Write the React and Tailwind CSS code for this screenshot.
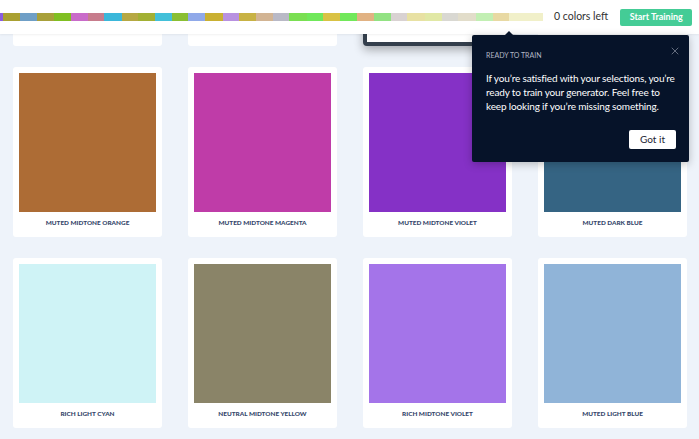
import { X } from 'lucide-react'

const progress = [
  ['#8a5ce0', 3], ['#a9a032', 17], ['#6f9fc6', 17], ['#a8a03a', 17], ['#80bf22', 17],
  ['#c96bc9', 17], ['#c77c8c', 16], ['#3bb7da', 18], ['#b6a843', 16], ['#a2b033', 17],
  ['#43c0d9', 17], ['#8abf33', 16], ['#90a9e9', 17], ['#c9b032', 18], ['#b891e0', 16],
  ['#c8b244', 17], ['#d2b493', 17], ['#b9b9c6', 16], ['#7adf52', 18], ['#70e85a', 16],
  ['#d9c244', 17], ['#72e85a', 17], ['#e1b283', 17], ['#92e283', 17], ['#d9d2d2', 16],
  ['#e8e1a3', 18], ['#e1e8a5', 17], ['#d9d8d2', 16], ['#e2ddca', 18], ['#c2efb3', 17],
  ['#e8d9a3', 16], ['#f1f0c9', 34],
]

const hiddenRow = [
  { name: '', color: '#ffffff' },
  { name: '', color: '#ffffff' },
  { name: '', color: '#ffffff', active: true },
  { name: '', color: '#ffffff' },
]

const swatches = [
  { name: 'Muted Midtone Orange', color: '#ad6c35' },
  { name: 'Muted Midtone Magenta', color: '#bf3ca8' },
  { name: 'Muted Midtone Violet', color: '#8531c6' },
  { name: 'Muted Dark Blue', color: '#356483' },
  { name: 'Rich Light Cyan', color: '#cff3f6' },
  { name: 'Neutral Midtone Yellow', color: '#8a8468' },
  { name: 'Rich Midtone Violet', color: '#a474e9' },
  { name: 'Muted Light Blue', color: '#90b4d8' },
]

function SwatchCard({ name, color, active }) {
  return (
    <div
      className={
        active
          ? 'flex h-[170px] flex-col rounded-[4px] border-[4px] border-[#343f4c] bg-white p-[2px] shadow-[0_4px_10px_rgba(0,0,0,0.3)]'
          : 'flex h-[170px] flex-col rounded-[3px] bg-white p-[6px]'
      }
    >
      <div className="h-[139px] w-full" style={{ backgroundColor: color }} />
      <div className="mt-[7px] text-center text-[6.4px] font-black uppercase leading-[8px] text-[#34466a]">
        {name}
      </div>
    </div>
  )
}

export default function App() {
  return (
    <div className="relative h-[439px] w-[699px] overflow-hidden bg-[#eef3fa] font-['Lato',sans-serif]">
      <header className="relative z-10 flex h-[34px] items-center bg-white shadow-[0_1px_2px_rgba(0,0,0,0.06)]">
        <div className="flex h-[8px] w-[543px]">
          {progress.map(([c, w], i) => (
            <div key={i} className="h-full shrink-0" style={{ backgroundColor: c, width: w }} />
          ))}
        </div>
        <span className="ml-[11px] text-[10.5px] text-[#333]">0 colors left</span>
        <button
          type="button"
          className="ml-[12px] flex h-[17px] w-[72px] items-center justify-center rounded-[2px] bg-[#44cc96] text-[9px] font-bold text-white"
        >
          Start Training
        </button>
      </header>

      <main className="h-[405px] overflow-hidden">
        <div className="mt-[-158px] grid grid-cols-4 gap-x-[26px] gap-y-[21px] pl-[13px] pr-[12px]">
          {hiddenRow.map((s, i) => (
            <SwatchCard key={'h' + i} {...s} />
          ))}
          {swatches.map((s) => (
            <SwatchCard key={s.name} {...s} />
          ))}
        </div>
      </main>

      <div className="absolute left-[472px] top-[35px] z-20 h-[127px] w-[217px] rounded-[2px] bg-[#061329] shadow-[0_2px_8px_rgba(0,0,0,0.25)]">
        <div className="absolute -top-[4px] left-[33px] h-0 w-0 border-x-[4px] border-b-[4px] border-x-transparent border-b-[#061329]" />
        <button type="button" className="absolute right-[8px] top-[10px] text-[#8c93a3]">
          <X size={12} strokeWidth={1.4} />
        </button>
        <div className="px-[14px] pt-[16px]">
          <div className="text-[7px] uppercase leading-[8px] text-[#b3b8c5]">Ready to train</div>
          <p className="mt-[12px] whitespace-nowrap text-[10px] leading-[14px] tracking-[-0.15px] text-white">
            If you’re satisfied with your selections, you’re
            <br />
            ready to train your generator. Feel free to
            <br />
            keep looking if you’re missing something.
          </p>
        </div>
        <button
          type="button"
          className="absolute bottom-[13px] right-[13px] flex h-[19px] w-[47px] items-center justify-center rounded-[2px] bg-white text-[10px] text-[#1d2433]"
        >
          Got it
        </button>
      </div>
    </div>
  )
}
